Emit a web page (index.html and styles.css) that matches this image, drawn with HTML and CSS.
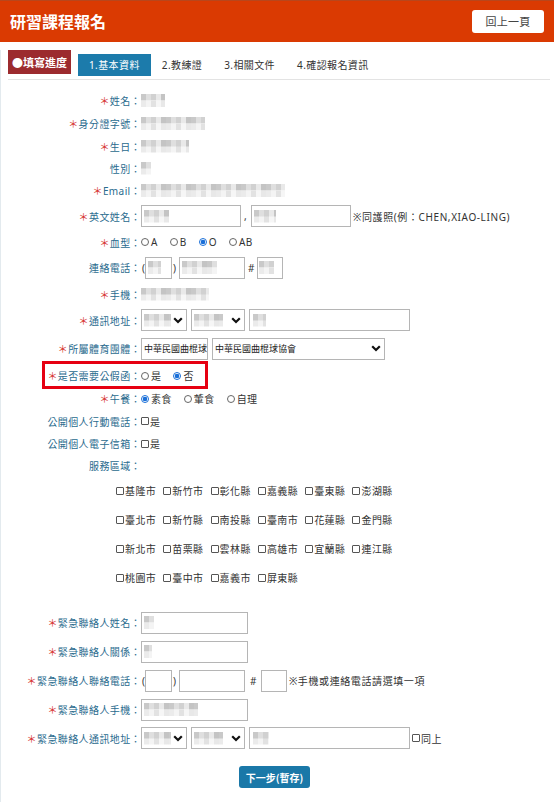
FILE: index.html
```html
<!DOCTYPE html>
<html lang="zh-Hant">
<head>
<meta charset="utf-8">
<title>研習課程報名</title>
<link rel="stylesheet" href="styles.css">
</head>
<body>
<header class="topbar">
  <h1 class="title">研習課程報名</h1>
  <button class="back" type="button">回上一頁</button>
</header>
<div class="content">
<nav class="progress">
  <span class="prog-label">●填寫進度</span>
  <span class="tab active">1.基本資料</span>
  <span class="tab">2.教練證</span>
  <span class="tab">3.相關文件</span>
  <span class="tab">4.確認報名資訊</span>
</nav>
<form class="form">
  <div class="row h23"><label class="lbl"><span class="req">＊</span>姓名：</label><span class="mosaic m24"></span></div>
  <div class="row h23"><label class="lbl"><span class="req">＊</span>身分證字號：</label><span class="mosaic m64"></span></div>
  <div class="row h22"><label class="lbl"><span class="req">＊</span>生日：</label><span class="mosaic m48"></span></div>
  <div class="row h22"><label class="lbl">性別：</label><span class="mosaic m10"></span></div>
  <div class="row h23"><label class="lbl"><span class="req">＊</span>Email：</label><span class="mosaic m144"></span></div>
  <div class="row h28"><label class="lbl"><span class="req">＊</span>英文姓名：</label>
    <span class="field w100"><span class="mosaic m25"></span></span><span class="comma">,</span><span class="field w100"><span class="mosaic m22"></span></span><span class="hint">※同護照(例：CHEN,XIAO-LING)</span>
  </div>
  <div class="row h24"><label class="lbl"><span class="req">＊</span>血型：</label>
    <label class="opt"><input class="rd" type="radio" name="blood">A</label>
    <label class="opt"><input class="rd" type="radio" name="blood">B</label>
    <label class="opt"><input class="rd" type="radio" name="blood" checked>O</label>
    <label class="opt"><input class="rd" type="radio" name="blood">AB</label>
  </div>
  <div class="row h27"><label class="lbl">連絡電話：</label>
    <span class="paren">(</span><span class="field w27"><span class="mosaic m13"></span></span><span class="paren pr">)</span><span class="field w66"><span class="mosaic m35"></span></span><span class="hash">#</span><span class="field w26 tight"><span class="mosaic m15"></span></span>
  </div>
  <div class="row h26"><label class="lbl"><span class="req">＊</span>手機：</label><span class="mosaic m68"></span></div>
  <div class="row h26"><label class="lbl"><span class="req">＊</span>通訊地址：</label>
    <span class="select w46"><span class="mosaic m27"></span><svg class="chev" width="10" height="7" viewBox="0 0 10 7"><path d="M1.2 1.2 L5 5 L8.8 1.2" fill="none" stroke="#111" stroke-width="2.2"/></svg></span>
    <span class="select w54"><span class="mosaic m29"></span><svg class="chev" width="10" height="7" viewBox="0 0 10 7"><path d="M1.2 1.2 L5 5 L8.8 1.2" fill="none" stroke="#111" stroke-width="2.2"/></svg></span>
    <span class="field w161"><span class="mosaic m13 ml"></span></span>
  </div>
  <div class="row h31"><label class="lbl"><span class="req">＊</span>所屬體育團體：</label>
    <span class="select w67 clip"><span class="seltext">中華民國曲棍球協會</span></span>
    <span class="select w173"><span class="seltext">中華民國曲棍球協會</span><svg class="chev" width="10" height="7" viewBox="0 0 10 7"><path d="M1.2 1.2 L5 5 L8.8 1.2" fill="none" stroke="#111" stroke-width="2.2"/></svg></span>
  </div>
  <div class="row h23"><div class="highlight"></div><label class="lbl"><span class="req">＊</span>是否需要公假函：</label>
    <label class="opt"><input class="rd" type="radio" name="leave">是</label>
    <label class="opt"><input class="rd" type="radio" name="leave" checked>否</label>
  </div>
  <div class="row h23"><label class="lbl"><span class="req">＊</span>午餐：</label>
    <label class="opt"><input class="rd" type="radio" name="lunch" checked>素食</label>
    <label class="opt"><input class="rd" type="radio" name="lunch">葷食</label>
    <label class="opt"><input class="rd" type="radio" name="lunch">自理</label>
  </div>
  <div class="row h22"><label class="lbl">公開個人行動電話：</label><label class="chk"><input class="cb" type="checkbox">是</label></div>
  <div class="row h23"><label class="lbl">公開個人電子信箱：</label><label class="chk"><input class="cb" type="checkbox">是</label></div>
  <div class="row h21"><label class="lbl">服務區域：</label></div>
  <div class="areas">
    <label class="chk"><input class="cb" type="checkbox">基隆市</label>
    <label class="chk"><input class="cb" type="checkbox">新竹市</label>
    <label class="chk"><input class="cb" type="checkbox">彰化縣</label>
    <label class="chk"><input class="cb" type="checkbox">嘉義縣</label>
    <label class="chk"><input class="cb" type="checkbox">臺東縣</label>
    <label class="chk"><input class="cb" type="checkbox">澎湖縣</label>
    <label class="chk"><input class="cb" type="checkbox">臺北市</label>
    <label class="chk"><input class="cb" type="checkbox">新竹縣</label>
    <label class="chk"><input class="cb" type="checkbox">南投縣</label>
    <label class="chk"><input class="cb" type="checkbox">臺南市</label>
    <label class="chk"><input class="cb" type="checkbox">花蓮縣</label>
    <label class="chk"><input class="cb" type="checkbox">金門縣</label>
    <label class="chk"><input class="cb" type="checkbox">新北市</label>
    <label class="chk"><input class="cb" type="checkbox">苗栗縣</label>
    <label class="chk"><input class="cb" type="checkbox">雲林縣</label>
    <label class="chk"><input class="cb" type="checkbox">高雄市</label>
    <label class="chk"><input class="cb" type="checkbox">宜蘭縣</label>
    <label class="chk"><input class="cb" type="checkbox">連江縣</label>
    <label class="chk"><input class="cb" type="checkbox">桃園市</label>
    <label class="chk"><input class="cb" type="checkbox">臺中市</label>
    <label class="chk"><input class="cb" type="checkbox">嘉義市</label>
    <label class="chk"><input class="cb" type="checkbox">屏東縣</label>
  </div>
  <div class="row h29"><label class="lbl"><span class="req">＊</span>緊急聯絡人姓名：</label><span class="field w107"><span class="mosaic m10"></span></span></div>
  <div class="row h29"><label class="lbl"><span class="req">＊</span>緊急聯絡人關係：</label><span class="field w107"><span class="mosaic m8"></span></span></div>
  <div class="row h29"><label class="lbl"><span class="req">＊</span>緊急聯絡人聯絡電話：</label>
    <span class="paren">(</span><span class="field w27"></span><span class="paren pr">)</span><span class="field w66"></span><span class="hash wide">#</span><span class="field w26"></span><span class="hint">※手機或連絡電話請選填一項</span>
  </div>
  <div class="row h29"><label class="lbl"><span class="req">＊</span>緊急聯絡人手機：</label><span class="field w107"><span class="mosaic m54"></span></span></div>
  <div class="row h28"><label class="lbl"><span class="req">＊</span>緊急聯絡人通訊地址：</label>
    <span class="select w46"><span class="mosaic m27"></span><svg class="chev" width="10" height="7" viewBox="0 0 10 7"><path d="M1.2 1.2 L5 5 L8.8 1.2" fill="none" stroke="#111" stroke-width="2.2"/></svg></span>
    <span class="select w54"><span class="mosaic m29"></span><svg class="chev" width="10" height="7" viewBox="0 0 10 7"><path d="M1.2 1.2 L5 5 L8.8 1.2" fill="none" stroke="#111" stroke-width="2.2"/></svg></span>
    <span class="field w161"><span class="mosaic m16 ml"></span></span>
    <label class="chk same"><input class="cb" type="checkbox">同上</label>
  </div>
  <div class="actions"><button class="next" type="button">下一步(暫存)</button></div>
</form>
</div>
</body>
</html>
```

FILE: styles.css
```css
* { box-sizing: border-box; }
html, body { margin: 0; padding: 0; background: #fff; }
body {
  width: 554px;
  font-family: "Noto Sans", "Noto Sans CJK TC", sans-serif;
  font-size: 10px;
  letter-spacing: 0.4px;
  color: #333;
}

/* header */
.topbar {
  height: 42px;
  background: #da3a02;
  box-shadow: inset 0 1px 0 #b8461c;
  display: flex;
  align-items: center;
  justify-content: space-between;
  padding: 0 10px 0 10px;
}
.title {
  margin: 0;
  color: #fff;
  font-family: "Noto Sans CJK TC", sans-serif;
  font-size: 16px;
  font-weight: 700;
  letter-spacing: 0;
}
.back {
  width: 72px;
  height: 23px;
  border: none;
  border-radius: 3px;
  background: #fff;
  color: #444;
  font-family: "Noto Sans CJK TC", sans-serif;
  font-size: 11px;
  letter-spacing: 0.3px;
  padding: 0;
}

.content {
  box-shadow: inset 1px 0 0 #e3eaee;
  min-height: 760px;
}

/* progress */
.progress {
  display: flex;
  align-items: flex-start;
  height: 30px;
  margin: 8px 4px 0 8px;
  border-bottom: 1px solid #e3e3e3;
}
.prog-label {
  height: 24px;
  line-height: 24px;
  padding: 0 4px;
  background: #9c2b2e;
  color: #fff;
  font-family: "Noto Sans CJK TC", sans-serif;
  font-weight: 700;
  font-size: 11px;
  letter-spacing: 0;
}
.tab {
  height: 22px;
  line-height: 22px;
  margin-top: 4px;
  padding: 0 11px;
  color: #333;
}
.tab.active {
  margin-left: 7px;
  background: #1c7bab;
  color: #fff;
}

/* form */
.form {
  width: 549px;
  padding-top: 9px;
}
.row {
  position: relative;
  display: flex;
  align-items: center;
  white-space: nowrap;
}
.h21 { height: 21px; }
.h22 { height: 22px; }
.h23 { height: 23px; }
.h24 { height: 24px; }
.h26 { height: 26px; }
.h27 { height: 27px; }
.h28 { height: 28px; }
.h29 { height: 29px; }
.h31 { height: 31px; }

.lbl {
  flex: 0 0 141px;
  text-align: right;
  color: #2a6b8e;
}
.req { color: #d6342e; }

.mosaic {
  display: inline-block;
  height: 13px;
  background:
    repeating-linear-gradient(90deg, #c9c9c9 0 5px, #dfdfdf 5px 10px, #d1d1d1 10px 15px, #e9e9e9 15px 20px, #c4c4c4 20px 25px) top / 100% 50% no-repeat,
    repeating-linear-gradient(90deg, #ebebeb 0 5px, #f4f4f4 5px 10px, #e2e2e2 10px 15px, #f6f6f6 15px 20px, #e8e8e8 20px 25px) bottom / 100% 50% no-repeat;
}
.ml { margin-left: 1px; }
.m8 { width: 8px; }
.m10 { width: 10px; }
.m13 { width: 13px; }
.m15 { width: 15px; }
.m16 { width: 16px; }
.m22 { width: 22px; }
.m24 { width: 24px; }
.m25 { width: 25px; }
.m27 { width: 27px; }
.m29 { width: 29px; }
.m35 { width: 35px; }
.m48 { width: 48px; }
.m54 { width: 54px; }
.m64 { width: 64px; }
.m68 { width: 68px; }
.m144 { width: 144px; }

.field, .select {
  display: inline-flex;
  align-items: center;
  height: 22px;
  border: 1px solid #b5b5b5;
  background: #fff;
  padding: 0 2px;
  flex: none;
}
.select {
  justify-content: space-between;
  padding: 0 3px 0 2px;
  margin-right: 4px;
  overflow: hidden;
}
.select.clip { justify-content: flex-start; padding-right: 0; }
.seltext {
  font-family: "Noto Sans CJK TC", sans-serif;
  font-size: 9px;
  letter-spacing: 0;
  color: #222;
  white-space: nowrap;
}
.clip .seltext {
  display: block;
  max-width: 100%;
  overflow: hidden;
}
.chev { flex: none; }
.field.tight { padding-left: 1px; }
.w26 { width: 26px; }
.w27 { width: 27px; }
.w46 { width: 46px; }
.w54 { width: 54px; }
.w66 { width: 66px; }
.w67 { width: 67px; }
.w100 { width: 100px; }
.w107 { width: 107px; }
.w161 { width: 161px; }
.w173 { width: 173px; }

.comma { width: 10px; padding-left: 3px; }
.hint { margin-left: 2px; letter-spacing: 0.6px; }
.paren { width: 4px; padding-left: 1px; }
.paren.pr { margin-right: 3px; }
.hash { margin: 0 2px 0 3px; }
.hash.wide { margin: 0 4px 0 5px; }

/* radios & checkboxes */
.opt {
  display: inline-flex;
  align-items: center;
  margin-right: 12px;
}
.rd {
  appearance: none;
  -webkit-appearance: none;
  width: 8px;
  height: 8px;
  margin: 0 2px 0 0;
  border: 1px solid #666;
  border-radius: 50%;
  background: #fff;
}
.rd:checked {
  border-color: #1a6fd8;
  background: radial-gradient(circle, #1a6fd8 0 2px, #fff 2.6px);
}
.chk {
  display: inline-flex;
  align-items: center;
}
.cb {
  appearance: none;
  -webkit-appearance: none;
  width: 8px;
  height: 8px;
  margin: 0 1px 0 0;
  border: 1px solid #555;
  border-radius: 1px;
  background: #fff;
}
.same { margin-left: 2px; }

.areas {
  display: grid;
  grid-template-columns: repeat(6, 47.3px);
  grid-auto-rows: 29px;
  align-items: center;
  padding-left: 116px;
  margin-bottom: 16px;
}

.highlight {
  position: absolute;
  left: 42px;
  top: -3px;
  width: 166px;
  height: 28px;
  border: 3px solid #e60012;
  pointer-events: none;
}

.actions {
  display: flex;
  justify-content: center;
  margin-top: 14px;
}
.next {
  width: 71px;
  height: 22px;
  border: none;
  border-radius: 3px;
  background: #1a78a8;
  color: #fff;
  font-family: "Noto Sans CJK TC", sans-serif;
  font-size: 10px;
  font-weight: 700;
  letter-spacing: 0;
  padding: 0;
}
```
